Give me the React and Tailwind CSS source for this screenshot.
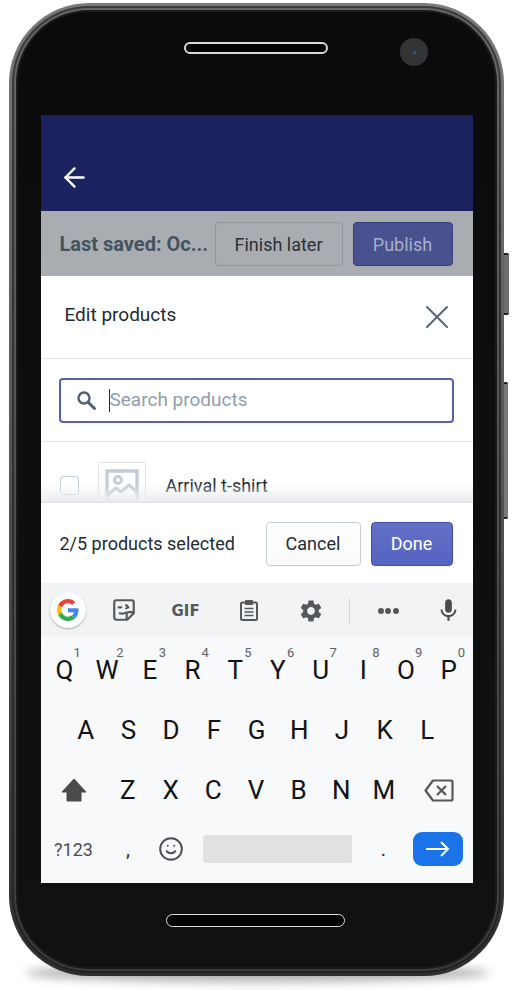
import React from "react";
import { ArrowLeft, X, Smile } from "lucide-react";

const rowOne = [["Q", "1"], ["W", "2"], ["E", "3"], ["R", "4"], ["T", "5"], ["Y", "6"], ["U", "7"], ["I", "8"], ["O", "9"], ["P", "0"]];
const rowTwo = ["A", "S", "D", "F", "G", "H", "J", "K", "L"];
const rowThree = ["Z", "X", "C", "V", "B", "N", "M"];

const Key = ({ children, className = "" }) => (
  <div className={`flex items-center justify-center w-[42.7px] text-[26px] leading-none text-[#111214] ${className}`}>
    {children}
  </div>
);

const GoogleLogo = () => (
  <svg viewBox="0 0 48 48" className="w-[22px] h-[22px]">
    <path fill="#EA4335" d="M24 9.5c3.5 0 6.6 1.2 9.1 3.6l6.8-6.8C35.8 2.5 30.4 0 24 0 14.600 0 6.600 5.400 2.700 13.200l7.900 6.100C12.500 13.600 17.800 9.500 24 9.500z" />
    <path fill="#4285F4" d="M46.900 24.500c0-1.600-.1-3.100-.4-4.500H24v9h12.900c-.6 3-2.200 5.500-4.800 7.200l7.700 6c4.500-4.200 7.100-10.300 7.100-17.700z" />
    <path fill="#FBBC05" d="M10.600 28.700c-.5-1.500-.8-3-.8-4.700s.3-3.200.8-4.700l-7.900-6.100C1 16.500 0 20.100 0 24s1 7.500 2.700 10.800l7.900-6.100z" />
    <path fill="#34A853" d="M24 48c6.500 0 11.900-2.100 15.800-5.800l-7.700-6c-2.100 1.400-4.900 2.300-8.100 2.300-6.200 0-11.500-4.200-13.400-9.800l-7.900 6.100C6.600 42.600 14.600 48 24 48z" />
  </svg>
);

const Sticker = () => (
  <svg viewBox="0 0 24 24" className="w-[26px] h-[26px]" fill="none" stroke="#56595c" strokeWidth="2">
    <path d="M5 3h14a2 2 0 0 1 2 2v10l-6 6H5a2 2 0 0 1-2-2V5a2 2 0 0 1 2-2z" strokeLinejoin="round" />
    <path d="M21 14h-4.500a2 2 0 0 0-2 2v5" strokeLinejoin="round" />
    <path d="M7 9.500h2.500M14 7.500l2 2-2 1" strokeLinecap="round" strokeLinejoin="round" />
    <path d="M8 15c2 .6 4 .4 5.500-.6" strokeLinecap="round" />
  </svg>
);

const Clipboard = () => (
  <svg viewBox="0 0 18 22" className="w-[18px] h-[22px]" fill="none" stroke="#56595c" strokeWidth="2">
    <rect x="1" y="3.500" width="16" height="17.500" rx="1.500" />
    <path d="M5.500 1.500h7v4h-7z" fill="#56595c" strokeWidth="1" />
    <path d="M4.500 9.500h9M4.500 13h9M4.500 16.500h9" strokeWidth="1.600" />
  </svg>
);

const Gear = () => (
  <svg viewBox="0 0 24 24" className="w-[26px] h-[26px]" fill="#56595c">
    <path d="M19.14 12.94c.04-.3.06-.61.06-.94 0-.32-.02-.64-.07-.94l2.03-1.58c.18-.14.23-.41.12-.61l-1.920-3.320c-.12-.22-.37-.29-.59-.22l-2.390.96c-.5-.38-1.030-.7-1.620-.94l-.36-2.540c-.04-.24-.24-.41-.48-.41h-3.840c-.24 0-.43.17-.47.41l-.36 2.540c-.59.24-1.130.57-1.620.94l-2.390-.96c-.22-.08-.47 0-.59.22L2.740 8.870c-.12.21-.08.47.12.61l2.030 1.580c-.05.3-.09.63-.09.94s.02.64.07.94l-2.030 1.580c-.18.14-.23.41-.12.61l1.920 3.320c.12.22.37.29.59.22l2.390-.96c.5.38 1.030.7 1.620.94l.36 2.540c.05.24.24.41.48.41h3.840c.24 0 .44-.17.47-.41l.36-2.540c.59-.24 1.130-.56 1.620-.94l2.390.96c.22.08.47 0 .59-.22l1.920-3.320c.12-.22.07-.47-.12-.61l-2.010-1.580zM12 15.600c-1.980 0-3.600-1.620-3.600-3.600s1.620-3.600 3.600-3.600 3.600 1.620 3.600 3.600-1.620 3.600-3.600 3.600z" />
  </svg>
);

const MicIcon = () => (
  <svg viewBox="0 0 24 24" className="w-[27px] h-[27px]" fill="#4a4c4f">
    <path d="M12 14c1.660 0 3-1.340 3-3V5c0-1.660-1.340-3-3-3S9 3.340 9 5v6c0 1.660 1.340 3 3 3zm5.300-3c0 3-2.540 5.100-5.300 5.100S6.700 14 6.700 11H5c0 3.410 2.720 6.230 6 6.720V21h2v-3.280c3.280-.48 6-3.300 6-6.720h-1.700z" />
  </svg>
);

const SearchIcon = () => (
  <svg viewBox="0 0 19 19" className="w-[19px] h-[19px]" fill="none" stroke="#4f6070">
    <circle cx="7" cy="7" r="5.500" strokeWidth="2.400" />
    <path d="M11.500 11.500l6 6" strokeWidth="3" strokeLinecap="round" />
  </svg>
);

const Backspace = () => (
  <svg viewBox="0 0 30 23" className="w-[30px] h-[23px]" fill="none" stroke="#55585b" strokeWidth="2.200">
    <path d="M9 1.500h18a1.500 1.500 0 0 1 1.500 1.500v17a1.500 1.500 0 0 1-1.500 1.500H9L1.500 11.500z" strokeLinejoin="round" />
    <path d="M13 7l9 9M22 7l-9 9" />
  </svg>
);

const ImagePlaceholder = () => (
  <svg viewBox="0 0 34 34" className="w-[34px] h-[34px]" fill="none" stroke="#c4cdd5" strokeWidth="3.500">
    <rect x="2" y="2" width="30" height="30" />
    <circle cx="13" cy="11" r="3.500" strokeWidth="3" />
    <path d="M3 26l8-7 5 4 8-7 8 7" strokeLinejoin="round" strokeWidth="3" />
  </svg>
);

const App = () => {
  return (
    <div className="relative w-[517px] h-[990px] bg-white overflow-hidden font-['Roboto',sans-serif]">
      {/* ground shadow */}
      <div className="absolute left-[25px] top-[964px] w-[465px] h-[18px] rounded-[50%] bg-[#b0b0b0] blur-[5px]" />

      {/* side buttons */}
      <div className="absolute left-[500px] top-[253px] w-[9px] h-[62px] rounded-r-[2px] bg-[#6e6e6e] border-y-[2px] border-[#222]" />
      <div className="absolute left-[500px] top-[382px] w-[8px] h-[137px] rounded-r-[2px] bg-[#7a7a7a] border-y-[2px] border-[#222]" />

      {/* phone body, rim layers */}
      <div className="absolute left-[9px] top-[3px] w-[495px] h-[973px] rounded-[80px] bg-gradient-to-b from-[#7a7a7a] to-[#2e2e2e] p-[3px]">
        <div className="w-full h-full rounded-[77px] bg-gradient-to-b from-[#3b3b3b] to-[#222] p-[2px]">
          <div className="w-full h-full rounded-[75px] bg-gradient-to-b from-[#666] to-[#3a3a3a] p-[2px]">
            <div className="w-full h-full rounded-[73px] bg-[#1a1a1a] p-[2px]">
              <div className="w-full h-full rounded-[71px] bg-gradient-to-b from-[#0b0b0b] to-[#111] flex flex-col items-center">
                <div className="relative w-full h-[103px] shrink-0">
                  <div className="absolute left-[166px] top-[30px] w-[144px] h-[12px] rounded-full bg-black border-2 border-[#d8d8d8]" />
                  <div className="absolute left-[382px] top-[26px] w-[28px] h-[28px] rounded-full bg-[#333436] flex items-center justify-center">
                    <div className="w-[3px] h-[3px] rounded-full bg-[#0a66b0]" />
                  </div>
                </div>

                {/* screen */}
                <div className="w-[432px] h-[768px] shrink-0 flex flex-col bg-white">
                  <div className="h-[96px] bg-[#1c2260] flex items-center pl-[18px] pt-[29px] shrink-0">
                    <ArrowLeft className="w-[31px] h-[31px] text-white" strokeWidth={1.9} />
                  </div>

                  <div className="h-[65px] bg-[#a9adb2] flex items-center pl-[19px] pr-[20px] pt-[1px] shrink-0">
                    <div className="flex-1 text-[20px] font-bold text-[#45535f] whitespace-nowrap">Last saved: Oc...</div>
                    <div className="w-[128px] h-[44px] rounded-[4px] border border-[#8f969c] bg-[#a9adb2] flex items-center justify-center text-[18px] text-[#2a3238] mr-[10px]">
                      Finish later
                    </div>
                    <div className="w-[100px] h-[44px] rounded-[4px] border border-[#343f83] bg-[#47528f] flex items-center justify-center text-[18px] text-[#a9aecb]">
                      Publish
                    </div>
                  </div>

                  <div className="h-[83px] border-b border-[#e3e5ec] flex justify-between pl-[24px] pr-[16px] pt-[21px] shrink-0">
                    <div className="mt-[5px] text-[19px] leading-[26px] text-[#212b36]">Edit products</div>
                    <X className="w-[40px] h-[40px] text-[#566573]" strokeWidth={1.2} />
                  </div>

                  <div className="h-[83px] border-b border-[#e3e5ec] flex items-center pl-[18px] pr-[19px] shrink-0">
                    <div className="w-full h-[45px] rounded-[4px] border-2 border-[#5360b5] flex items-center pl-[16px]">
                      <SearchIcon />
                      <div className="w-px h-[23px] bg-[#212b36] ml-[13px]" />
                      <div className="text-[19px] leading-[26px] text-[#919eab]">Search products</div>
                    </div>
                  </div>

                  <div className="h-[60px] overflow-hidden relative flex pl-[19px] pt-[20px] shrink-0">
                    <div className="w-[19px] h-[19px] mt-[14px] rounded-[3px] border border-[#c4cdd5] bg-white" />
                    <div className="w-[48px] h-[48px] ml-[19px] rounded-[3px] border border-[#dfe3e8] flex items-center justify-center">
                      <ImagePlaceholder />
                    </div>
                    <div className="ml-[20px] mt-[11px] text-[18px] leading-[26px] text-[#212b36]">Arrival t-shirt</div>
                    <div className="absolute left-0 right-0 bottom-0 h-[18px] bg-gradient-to-b from-transparent to-[#ebecef]" />
                  </div>

                  <div className="h-[81px] border-t border-[#dfe1e6] flex items-center pl-[19px] pr-[20px] pt-[1px] shrink-0">
                    <div className="flex-1 text-[18px] text-[#212b36]">2/5 products selected</div>
                    <div className="w-[95px] h-[44px] rounded-[4px] border border-[#c4cdd5] bg-gradient-to-b from-white to-[#f9fafb] flex items-center justify-center text-[18px] text-[#212b36] mr-[10px]">
                      Cancel
                    </div>
                    <div className="w-[82px] h-[44px] rounded-[4px] border border-[#3f4eae] bg-gradient-to-b from-[#6371c7] to-[#5563c1] flex items-center justify-center text-[18px] text-white">
                      Done
                    </div>
                  </div>

                  {/* keyboard toolbar */}
                  <div className="h-[54px] bg-[#f1f3f4] relative shrink-0">
                    <div className="absolute left-[9px] top-[9px] w-[36px] h-[36px] rounded-full bg-white shadow-[0_1px_2px_rgba(0,0,0,0.3)] flex items-center justify-center">
                      <GoogleLogo />
                    </div>
                    <div className="absolute left-[70px] top-[14px]"><Sticker /></div>
                    <div className="absolute left-[131px] top-[18px] text-[15px] leading-[20px] font-bold font-['DejaVu_Sans',sans-serif] text-[#56595c]">GIF</div>
                    <div className="absolute left-[199px] top-[16px]"><Clipboard /></div>
                    <div className="absolute left-[257px] top-[15px]"><Gear /></div>
                    <div className="absolute left-[308px] top-[15px] w-px h-[26px] bg-[#d5d7d9]" />
                    <div className="absolute left-[337px] top-[25px] flex gap-[1.5px]">
                      <div className="w-[6px] h-[6px] rounded-full bg-[#56595c]" />
                      <div className="w-[6px] h-[6px] rounded-full bg-[#56595c]" />
                      <div className="w-[6px] h-[6px] rounded-full bg-[#56595c]" />
                    </div>
                    <div className="absolute left-[394px] top-[14px]"><MicIcon /></div>
                  </div>

                  {/* keyboard */}
                  <div className="flex-1 bg-[#f8f9fb] flex flex-col pt-[3px]">
                    <div className="h-[60px] flex items-center pl-[2.6px]">
                      {rowOne.map(([letter, num]) => (
                        <Key key={letter} className="relative h-[42px]">
                          {letter}
                          <span className="absolute right-[5px] top-[-3px] text-[13px] leading-none text-[#5f6368]">{num}</span>
                        </Key>
                      ))}
                    </div>
                    <div className="h-[60px] flex items-center justify-center">
                      {rowTwo.map((letter) => <Key key={letter}>{letter}</Key>)}
                    </div>
                    <div className="h-[60px] flex items-center">
                      <Key className="w-[66px]">
                        <svg viewBox="0 0 26 24" className="w-[26px] h-[24px]">
                          <path fill="#4b4b4b" strokeLinejoin="round" stroke="#4b4b4b" d="M13 1 L25 14 H20 V23 H6 V14 H1 Z" />
                        </svg>
                      </Key>
                      {rowThree.map((letter) => <Key key={letter}>{letter}</Key>)}
                      <Key className="w-[67px]">
                        <Backspace />
                      </Key>
                    </div>
                    <div className="h-[58px] flex items-center">
                      <div className="w-[66px] text-center text-[18px] text-[#4b4f53]">?123</div>
                      <div className="w-[43px] text-center text-[20px] text-[#333]">,</div>
                      <div className="w-[43px] flex justify-center">
                        <Smile className="w-[26px] h-[26px] text-[#4b4f53]" strokeWidth={1.8} />
                      </div>
                      <div className="w-[149px] h-[28px] ml-[10px] rounded-[3px] bg-[#e0e1e1]" />
                      <div className="w-[61px] pl-[3px] text-center text-[20px] text-[#333]">.</div>
                      <div className="w-[50px] h-[34px] rounded-[9px] bg-[#1a73e8] flex items-center justify-center">
                        <svg viewBox="0 0 24 16" className="w-[24px] h-[16px]" fill="none" stroke="white" strokeWidth="2">
                          <path d="M0 8h22M15 1l7 7-7 7" />
                        </svg>
                      </div>
                    </div>
                  </div>
                </div>

                <div className="relative w-full flex-1">
                  <div className="absolute left-[148px] top-[31px] w-[179px] h-[13px] rounded-full bg-black border border-[#e0e0e0]" />
                </div>
              </div>
            </div>
          </div>
        </div>
      </div>
    </div>
  );
};

export default App;
